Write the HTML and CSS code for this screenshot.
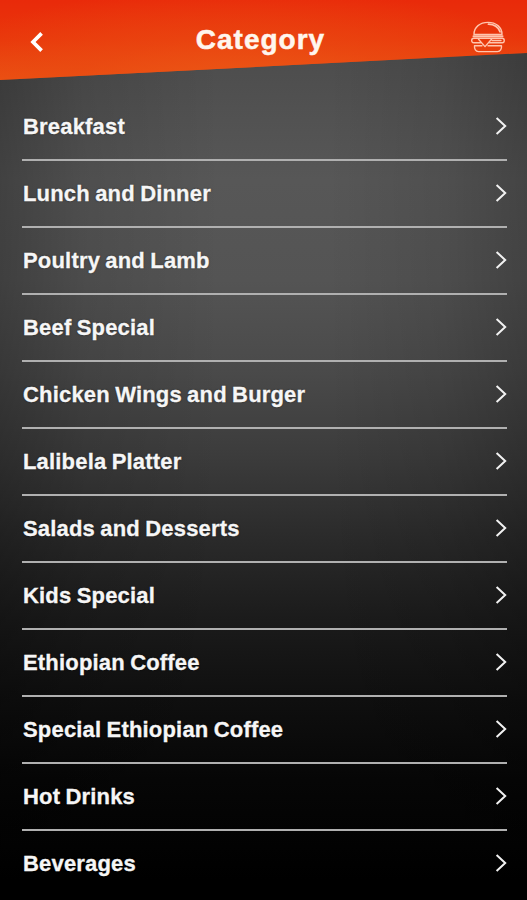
FILE: index.html
```html
<!DOCTYPE html>
<html lang="en">
<head>
<meta charset="utf-8">
<title>Category</title>
<link rel="stylesheet" href="styles.css">
</head>
<body>
<svg class="defs" width="0" height="0" aria-hidden="true">
  <symbol id="next" viewBox="0 0 12 20"><path d="M1.6 2 L10.2 10 L1.6 18" fill="none" stroke="currentColor" stroke-width="2"/></symbol>
</svg>
<div class="screen">
  <header class="header">
    <svg class="back" viewBox="0 0 14 22"><path d="M11.6 2.4 L3 11 L11.6 19.6" fill="none" stroke="#fff" stroke-width="3.7"/></svg>
    <h1 class="title">Category</h1>
    <svg class="burger" viewBox="0 0 36 32" fill="none" stroke="#ffc5ae" stroke-width="1.4" stroke-linejoin="round" stroke-linecap="round">
      <path d="M4 13.4 C4 6 10 1.4 18 1.4 S32 6 32 13.4 Z"/>
      <path d="M18.5 3.2 C24 3.4 28.4 6.3 30 10.8" stroke-width="1.8"/>
      <path d="M3.5 15.2 H32.5" stroke-width="2"/>
      <path d="M3.7 17.2 H32.3 C34.9 17.2 34.9 21.8 32.3 21.8 H19.5 M10.5 21.8 H3.7 C1 21.8 1 17.2 3.7 17.2"/>
      <path d="M8.5 18.2 L15 25.6 L21.5 18.2"/>
      <path d="M22 19.5 H31"/>
      <path d="M4.5 24.8 H12 M18 24.8 H31.5 C31.8 28 30.3 30.6 27.5 30.6 H8.5 C5.7 30.6 4.2 28 4.5 24.8"/>
    </svg>
  </header>
  <ul class="list">
    <li class="row"><span>Breakfast</span><svg class="next"><use href="#next"/></svg></li>
    <li class="row"><span>Lunch and Dinner</span><svg class="next"><use href="#next"/></svg></li>
    <li class="row"><span>Poultry and Lamb</span><svg class="next"><use href="#next"/></svg></li>
    <li class="row"><span>Beef Special</span><svg class="next"><use href="#next"/></svg></li>
    <li class="row"><span>Chicken Wings and Burger</span><svg class="next"><use href="#next"/></svg></li>
    <li class="row"><span>Lalibela Platter</span><svg class="next"><use href="#next"/></svg></li>
    <li class="row"><span>Salads and Desserts</span><svg class="next"><use href="#next"/></svg></li>
    <li class="row"><span>Kids Special</span><svg class="next"><use href="#next"/></svg></li>
    <li class="row"><span>Ethiopian Coffee</span><svg class="next"><use href="#next"/></svg></li>
    <li class="row"><span>Special Ethiopian Coffee</span><svg class="next"><use href="#next"/></svg></li>
    <li class="row"><span>Hot Drinks</span><svg class="next"><use href="#next"/></svg></li>
    <li class="row"><span>Beverages</span><svg class="next"><use href="#next"/></svg></li>
  </ul>
</div>
</body>
</html>
```
FILE: styles.css
```css
* { box-sizing: border-box; }
body { margin: 0; background: #000; }
.defs { display: block; }
.screen {
  width: 527px;
  height: 900px;
  overflow: hidden;
  font-family: "Arial Rounded MT Bold", "Liberation Sans", Arial, sans-serif;
  font-weight: 700;
  color: #f6f6f6;
  background:
    linear-gradient(90deg, rgba(0,0,0,.25) 0, rgba(0,0,0,.1) 16%, transparent 42%, transparent 62%, rgba(0,0,0,.09) 84%, rgba(0,0,0,.22) 100%),
    linear-gradient(180deg, #4d4d4d 60px, #575757 180px, #545454 280px, #4a4a4a 370px, #3c3c3c 455px, #2a2a2a 540px, #1b1b1b 620px, #0f0f0f 700px, #060606 780px, #000 880px);
}
.header {
  display: flex;
  align-items: flex-start;
  justify-content: space-between;
  height: 81px;
  padding: 0 22px 0 30px;
  background:
    radial-gradient(ellipse 340px 100px at 46% 88px, rgba(236,88,22,.9) 0, rgba(234,76,18,.6) 50%, rgba(232,40,10,0) 100%),
    linear-gradient(180deg, #e92a0a 0, #e9360b 50%, #ea5213 100%);
  clip-path: polygon(0 0, 100% 0, 100% 53px, 0 80px);
}
.back { width: 14px; height: 22px; margin-top: 31px; }
.title {
  margin: 23px 0 0 7px;
  font-size: 28px;
  line-height: 34px;
  font-weight: 700;
  letter-spacing: 1px;
  color: #fff6ee;
  -webkit-text-stroke: .5px #fff6ee;
}
.burger { width: 36px; height: 32px; margin-top: 21px; margin-right: -1px; }
.list { list-style: none; margin: 0; padding: 13px 20px 0 22px; }
.row {
  display: flex;
  align-items: center;
  justify-content: space-between;
  height: 67px;
  padding-left: 1px;
  font-size: 22px;
  letter-spacing: .18px;
  word-spacing: -1px;
  -webkit-text-stroke: .3px #f6f6f6;
  border-bottom: 2px solid #b0b0b0;
  white-space: nowrap;
  text-shadow: 0 0 2px rgba(0,0,0,.6);
}
.row:last-child { border-bottom-color: transparent; }
.next { width: 12px; height: 20px; margin-top: -1px; color: #f2f2f2; }
```
